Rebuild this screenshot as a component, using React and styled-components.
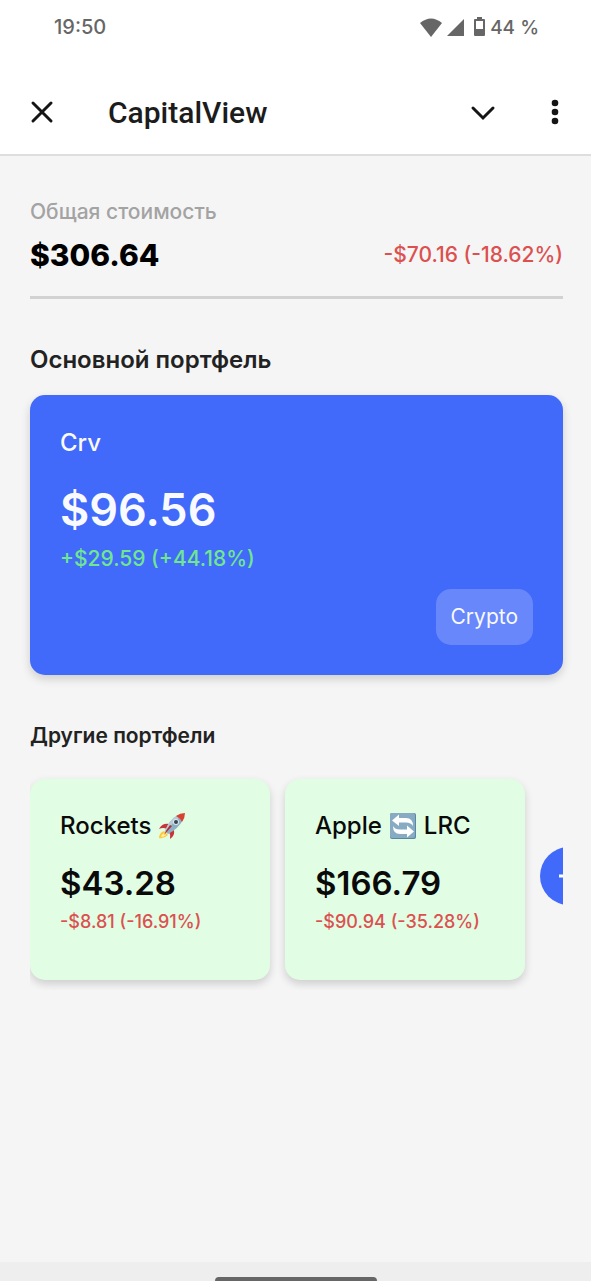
import styled, { createGlobalStyle } from "styled-components";

const portfolios = [
    {
        id: 1,
        name: "Rockets",
        emoji: "rocket",
        value: "$43.28",
        change: "-$8.81 (-16.91%)",
    },
    {
        id: 2,
        name: "Apple",
        emoji: "arrows",
        nameEnd: "LRC",
        value: "$166.79",
        change: "-$90.94 (-35.28%)",
    },
];

const RocketIcon = () => (
    <Emoji viewBox="0 0 28 28" role="img" aria-label="rocket">
        <path d="M6 19 Q1 21 1 26 Q6 27 10 23Z" fill="#ffc93c" />
        <path d="M6 21 Q3 23 3 25 Q6 25 8 23Z" fill="#fff3a0" />
        <path d="M11 12 Q4 11 1 17 Q5 15 9 17Z" fill="#c8343a" />
        <path d="M16 18 Q17 24 12 27 Q13 23 11 20Z" fill="#c8343a" />
        <path d="M7 19 Q11 8 20 3 L25 8 Q20 17 10 22Z" fill="#8fb0c4" />
        <path d="M7 19 Q11 8 20 3 L22 5 Q13 12 8 20Z" fill="#b6ccd8" />
        <path d="M18 4 Q22 1 27 1 Q27 6 24 10 Q22 6 18 4Z" fill="#d8432f" />
        <path d="M14 14 L6 23 Q8 18 12 13Z" fill="#b02a37" />
        <circle cx="18" cy="10" r="3" fill="#dbe6ec" />
        <circle cx="18" cy="10" r="2" fill="#37474f" />
    </Emoji>
);

const ArrowsIcon = () => (
    <Emoji viewBox="0 0 28 28" role="img" aria-label="arrows">
        <rect x="1" y="1" width="26" height="26" rx="2" fill="#5b87a3" />
        <rect x="1" y="1" width="25" height="25" rx="2" fill="#86abc3" />
        <path
            d="M3 8.5 L10 2.5 V6 H17 Q24 6 24 14 Q22 10.5 17 10.5 H10 V14Z"
            fill="#fff"
        />
        <path
            d="M25 19.5 L18 25.5 V22 H11 Q4 22 4 14 Q6 17.5 11 17.5 H18 V13.5Z"
            fill="#fff"
        />
    </Emoji>
);

const PortfolioCard = ({ data }) => {
    return (
        <SmallCard>
            <h3>
                {data.name}
                {data.emoji === "rocket" ? <RocketIcon /> : <ArrowsIcon />}
                {data.nameEnd}
            </h3>
            <strong>{data.value}</strong>
            <Change $size="18px">{data.change}</Change>
        </SmallCard>
    );
};

const App = () => {
    return (
        <>
            <GlobalStyle />
            <Screen>
                <StatusBar>
                    <time>19:50</time>
                    <StatusIcons>
                        <svg width="22" height="19" viewBox="0 0 22 19">
                            <path d="M0 5 Q11 -4 22 5 L11 19Z" />
                        </svg>
                        <svg width="19" height="19" viewBox="0 0 19 19">
                            <path d="M18 1 V18 H1Z" />
                        </svg>
                        <svg width="13" height="20" viewBox="0 0 13 20">
                            <path
                                fillRule="evenodd"
                                d="M4 0 H9 V2 H11 Q12 2 12 3 V18 Q12 19 11 19 H2 Q1 19 1 18 V3 Q1 2 2 2 H4Z M3 4 V12 H10 V4Z"
                            />
                        </svg>
                        <span>44 %</span>
                    </StatusIcons>
                </StatusBar>
                <AppBar>
                    <button aria-label="Закрыть">
                        <svg width="24" height="24" viewBox="0 0 24 24">
                            <path d="M3 3 L21 21 M21 3 L3 21" />
                        </svg>
                    </button>
                    <h1>CapitalView</h1>
                    <button aria-label="Свернуть">
                        <svg width="26" height="24" viewBox="0 0 26 24">
                            <path d="M3 8 L13 18 L23 8" />
                        </svg>
                    </button>
                    <button aria-label="Меню">
                        <svg width="8" height="26" viewBox="0 0 8 26">
                            <g fill="#151515" stroke="none">
                                <circle cx="4" cy="4" r="3.3" />
                                <circle cx="4" cy="13" r="3.3" />
                                <circle cx="4" cy="22" r="3.3" />
                            </g>
                        </svg>
                    </button>
                </AppBar>
                <Content>
                    <Total>
                        <p>Общая стоимость</p>
                        <div>
                            <strong>$306.64</strong>
                            <Change $size="21px">-$70.16 (-18.62%)</Change>
                        </div>
                    </Total>
                    <SectionTitle $size="24px">Основной портфель</SectionTitle>
                    <MainCard>
                        <h3>Crv</h3>
                        <strong>$96.56</strong>
                        <Change $size="21px" $up>
                            +$29.59 (+44.18%)
                        </Change>
                        <Tag>Crypto</Tag>
                    </MainCard>
                    <SectionTitle $size="21px">Другие портфели</SectionTitle>
                    <CardList>
                        {portfolios.map((item) => (
                            <PortfolioCard data={item} key={item.id} />
                        ))}
                        <AddButton aria-label="Добавить портфель">
                            <svg width="20" height="20" viewBox="0 0 20 20">
                                <path d="M0 10 H20 M10 0 V20" />
                            </svg>
                        </AddButton>
                    </CardList>
                </Content>
                <NavBar>
                    <div />
                </NavBar>
            </Screen>
        </>
    );
};

export default App;

const GlobalStyle = createGlobalStyle`
    * {
        box-sizing: border-box;
    }
    body {
        margin: 0;
        background-color: #f5f5f5;
        font-family: Inter, "Noto Sans", sans-serif;
    }
    h1, h2, h3, p {
        margin: 0;
        font-weight: 400;
    }
    button {
        margin: 0;
        padding: 0;
        border: 0;
        background: none;
        cursor: pointer;
    }
`;

const Screen = styled.div`
    min-height: 100vh;
    display: flex;
    flex-direction: column;
`;

const StatusBar = styled.div`
    display: flex;
    justify-content: space-between;
    align-items: center;
    height: 54px;
    padding: 0 52px 0 54px;
    background: #fff;
    color: #666;
    font-size: 20px;
    font-weight: 500;
`;

const StatusIcons = styled.div`
    display: flex;
    align-items: center;
    gap: 4px;
    & svg {
        fill: #666;
    }
    & svg:nth-child(3) {
        margin-left: 4px;
    }
    & span {
        font-size: 19px;
    }
`;

const AppBar = styled.header`
    display: flex;
    align-items: center;
    height: 102px;
    padding: 16px 32px 0 30px;
    background: #fff;
    border-bottom: 2px solid #dedede;
    & h1 {
        flex: 1;
        margin-left: 54px;
        color: #1c1c1c;
        font-family: Roboto, sans-serif;
        font-size: 30px;
        font-weight: 500;
    }
    & svg {
        display: block;
        fill: none;
        stroke: #151515;
        stroke-width: 3;
        stroke-linecap: round;
    }
    & button:last-child {
        margin-left: 55px;
    }
`;

const Content = styled.main`
    flex: 1;
    padding: 40px 28px 30px 30px;
`;

const Total = styled.section`
    padding-bottom: 22px;
    margin-bottom: 42px;
    border-bottom: 3px solid #d2d2d2;
    & p {
        color: #a3a3a3;
        font-size: 21px;
        font-weight: 500;
        line-height: 32px;
    }
    & div {
        display: flex;
        justify-content: space-between;
        align-items: center;
        margin-top: 8px;
        line-height: 38px;
    }
    & strong {
        color: #000;
        font-size: 30px;
        font-weight: 800;
    }
`;

const Change = styled.span`
    color: ${({ $up }) => ($up ? "#70e690" : "#dc5050")};
    font-size: ${({ $size }) => $size};
    font-weight: 500;
`;

const SectionTitle = styled.h2`
    color: #222;
    font-size: ${({ $size }) => $size};
    font-weight: 600;
    line-height: 38px;
`;

const MainCard = styled.article`
    display: flex;
    flex-direction: column;
    margin: 16px 0 42px;
    padding: 30px;
    border-radius: 15px;
    background: #4169fa;
    box-shadow: 0 4px 10px rgb(0 0 0 / 16%);
    color: #f8faff;
    & h3 {
        font-size: 24px;
        font-weight: 500;
        line-height: 36px;
    }
    & strong {
        margin-top: 20px;
        font-size: 45px;
        font-weight: 600;
        line-height: 58px;
    }
    & > span {
        line-height: 40px;
    }
`;

const Tag = styled.div`
    align-self: flex-end;
    margin-top: 10px;
    padding: 0 15px;
    border-radius: 15px;
    background: rgb(255 255 255 / 20%);
    font-size: 21px;
    line-height: 56px;
`;

const CardList = styled.div`
    display: flex;
    align-items: flex-start;
    gap: 15px;
    margin-top: 14px;
    padding: 10px 0;
    overflow-x: auto;
    scrollbar-width: none;
`;

const SmallCard = styled.article`
    flex: 0 0 240px;
    display: flex;
    flex-direction: column;
    padding: 30px 30px 42px;
    border-radius: 15px;
    background: #e1fde3;
    box-shadow: 0 4px 8px rgb(0 0 0 / 16%);
    color: #0a0a0a;
    & h3 {
        display: flex;
        align-items: center;
        gap: 7px;
        font-size: 24px;
        font-weight: 500;
        line-height: 34px;
        white-space: nowrap;
    }
    & strong {
        margin-top: 17px;
        font-size: 33px;
        font-weight: 600;
        line-height: 46px;
    }
    & span {
        line-height: 32px;
    }
`;

const Emoji = styled.svg`
    width: 28px;
    height: 28px;
`;

const AddButton = styled.button`
    flex: 0 0 58px;
    align-self: center;
    display: flex;
    justify-content: center;
    align-items: center;
    height: 58px;
    margin-bottom: 8px;
    border-radius: 50%;
    background: #4169fa;
    & svg {
        stroke: #fff;
        stroke-width: 3;
    }
`;

const NavBar = styled.footer`
    display: flex;
    justify-content: center;
    align-items: flex-end;
    height: 19px;
    background: #eee;
    & div {
        width: 162px;
        height: 4px;
        border-radius: 4px 4px 0 0;
        background: #666;
    }
`;
